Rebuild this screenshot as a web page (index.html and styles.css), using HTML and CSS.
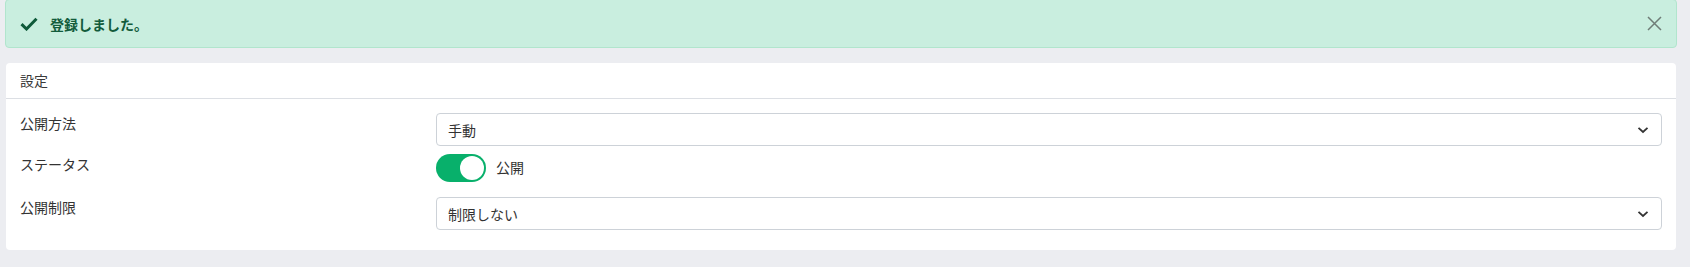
FILE: index.html
```html
<!DOCTYPE html>
<html lang="ja">
<head>
<meta charset="utf-8">
<link rel="stylesheet" href="styles.css">
</head>
<body>
<div class="page">
  <div class="alert">
    <svg class="alert-check" width="18" height="14" viewBox="0 0 18 14"><path d="M1.5 7.2 L6.5 12 L16.5 1.8" fill="none" stroke="currentColor" stroke-width="3" stroke-linejoin="miter" stroke-linecap="butt"/></svg>
    <span class="alert-text">登録しました。</span>
    <svg class="alert-close" width="15" height="15" viewBox="0 0 15 15"><path d="M1 1 L14 14 M14 1 L1 14" fill="none" stroke="currentColor" stroke-width="1.5"/></svg>
  </div>
  <div class="card">
    <div class="card-header">設定</div>
    <div class="card-body">
      <div class="form-row">
        <div class="form-label">公開方法</div>
        <div class="select"><span>手動</span><svg class="chev" width="12" height="8" viewBox="0 0 12 8"><path d="M1.5 1.8 L6 6 L10.5 1.8" fill="none" stroke="currentColor" stroke-width="1.8"/></svg></div>
      </div>
      <div class="form-row row-toggle">
        <div class="form-label">ステータス</div>
        <div class="toggle-wrap"><span class="toggle"><span class="knob"></span></span><span class="toggle-label">公開</span></div>
      </div>
      <div class="form-row">
        <div class="form-label">公開制限</div>
        <div class="select"><span>制限しない</span><svg class="chev" width="12" height="8" viewBox="0 0 12 8"><path d="M1.5 1.8 L6 6 L10.5 1.8" fill="none" stroke="currentColor" stroke-width="1.8"/></svg></div>
      </div>
    </div>
  </div>
</div>
</body>
</html>
```
FILE: styles.css
```css
html, body {
  margin: 0;
  padding: 0;
  background: #ecedf1;
}
body {
  font-family: "Noto Sans CJK JP", "Noto Sans", sans-serif;
  color: #333;
  font-size: 14px;
}
.page {
  padding: 0 13px 17px 5px;
}
.alert {
  margin-top: -1px;
  height: 49px;
  box-sizing: border-box;
  display: flex;
  align-items: center;
  background: #c9eedf;
  border: 1px solid #b1e5cd;
  border-radius: 4px;
  padding: 0 14px 0 14px;
  color: #135c3c;
}
.alert-check {
  margin-right: 12px;
  color: #0f5a3a;
}
.alert-text {
  font-size: 14px;
  font-weight: bold;
  flex: 1;
  line-height: 20px;
}
.alert-close {
  color: #6f7d77;
}
.card {
  margin: 15px 1px 0 1px;
  background: #fff;
  border-radius: 4px;
}
.card-header {
  height: 35px;
  line-height: 35px;
  border-bottom: 1px solid #dcdfe4;
  padding-left: 14px;
  font-size: 14px;
  color: #3a3a3a;
}
.card-body {
  padding: 14px 14px 20px 14px;
  display: flex;
  flex-direction: column;
  gap: 8px;
}
.form-row {
  display: grid;
  grid-template-columns: 416px 1fr;
  align-items: start;
}
.row-toggle {
  height: 35px;
}
.form-label {
  line-height: 20px;
  padding-top: 0;
  color: #333;
}
.select {
  height: 33px;
  box-sizing: border-box;
  border: 1px solid #cdd2d8;
  border-radius: 4px;
  display: flex;
  align-items: center;
  justify-content: space-between;
  padding: 0 12px 0 11px;
  color: #333;
  line-height: 20px;
}
.chev {
  color: #333;
}
.toggle-wrap {
  display: flex;
  align-items: center;
  height: 28px;
}
.toggle {
  width: 50px;
  height: 28px;
  border-radius: 14px;
  background: #08b06b;
  position: relative;
  display: block;
}
.knob {
  position: absolute;
  right: 2px;
  top: 2px;
  width: 24px;
  height: 24px;
  border-radius: 50%;
  background: #fff;
}
.toggle-label {
  margin-left: 10px;
  margin-top: -2px;
  color: #333;
  line-height: 20px;
}
```
